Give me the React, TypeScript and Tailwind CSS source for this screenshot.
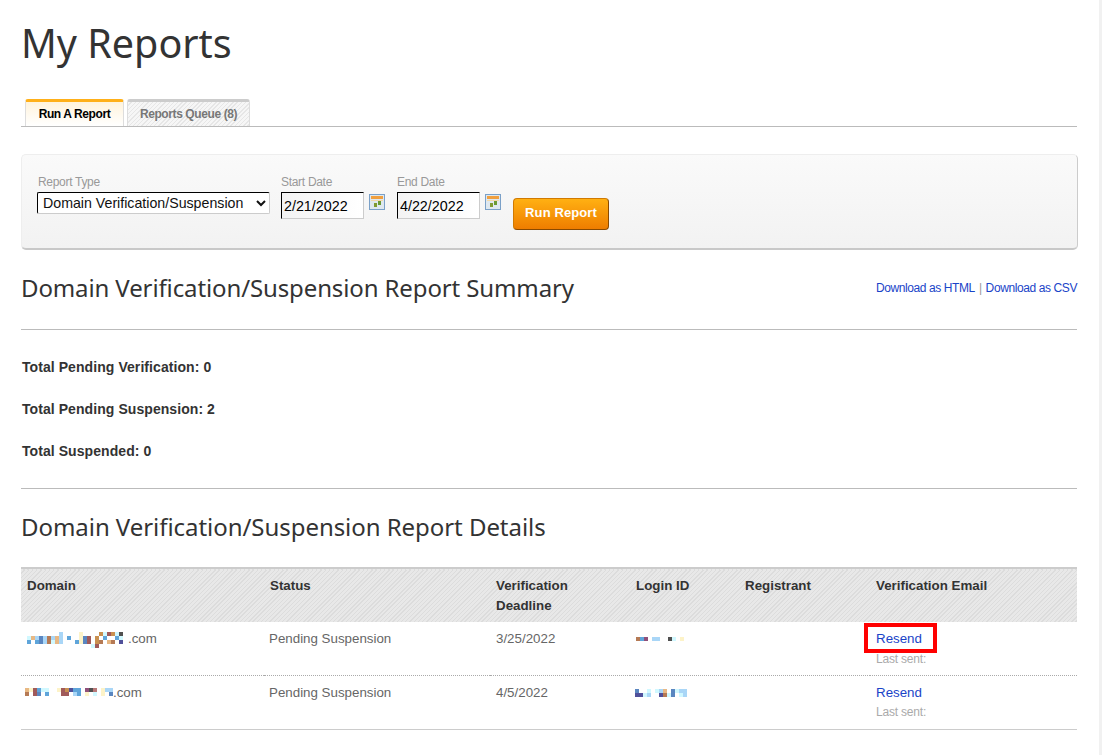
import React from 'react';

const palette: Record<string, string> = {
  a: '#a9d6f7',
  o: '#e8b884',
  d: '#5a86c0',
  b: '#b57a55',
  m: '#5fa5da',
  y: '#fdf3c8',
  r: '#a05a5a',
  c: '#c99050',
  p: '#d0f8ff',
  k: '#505050',
  n: '#50509a',
  u: '#90507a',
  v: '#b87878',
  z: '#fdfde0',
};

// stands in for the pixelated (redacted) parts of the table
const Mosaic = ({ rows, className }: { rows: string[]; className?: string }) => (
  <svg width={rows[0].length * 4} height={rows.length * 4} shapeRendering="crispEdges" className={className}>
    {rows.map((row, y) =>
      row.split('').map((ch, x) => (ch === '.' ? null : <rect key={`${x}-${y}`} x={x * 4} y={y * 4} width="4" height="4" fill={palette[ch]} />))
    )}
  </svg>
);

const CalendarIcon = () => (
  <svg width="16" height="16" viewBox="0 0 16 16" shapeRendering="crispEdges" className="mt-[2px] ml-[5px]">
    <rect x="0" y="0" width="16" height="16" fill="#7aa0c8" />
    <rect x="1" y="1" width="14" height="14" fill="#dfe8ef" />
    <rect x="2" y="2" width="12" height="3" fill="#f0a040" />
    <rect x="2" y="6" width="12" height="1" fill="#f3d9a8" />
    <rect x="5" y="9" width="3" height="4" fill="#7f9a30" />
    <rect x="9" y="7" width="3" height="4" fill="#6a9a35" />
  </svg>
);

const DateField = ({ label, value }: { label: string; value: string }) => (
  <div>
    <div className="text-[12px] leading-[14px] text-[#999] tracking-[-0.3px]">{label}</div>
    <div className="flex items-start mt-[3px]">
      <input
        readOnly
        value={value}
        className="w-[83px] h-[27px] pl-[2px] text-[14.3px] text-black bg-gradient-to-r from-[#f3f3f3] to-white border border-[#ccc] border-t-black border-l-black outline-none"
      />
      <CalendarIcon />
    </div>
  </div>
);

const Divider = () => <div className="h-px bg-[#bbb]" />;

const headers = ['Domain', 'Status', 'Verification Deadline', 'Login ID', 'Registrant', 'Verification Email'];

const rows = [
  {
    domain: ['........a....y....cprcpk', 'poadabaoa.m..ydr.c.m..mp', 'm.mdabpoa...mydr.cb.ob.n', '................pr......'],
    domainClass: 'mt-[3px]',
    comClass: 'ml-[5px]',
    status: 'Pending Suspension',
    deadline: '3/25/2022',
    login: ['bmu.aa..kp.y'],
    loginClass: 'mt-[8px]',
    sentClass: 'pt-[3px]',
    rowClass: 'h-[53px] border-b border-dotted border-[#aaa]',
    boxed: true,
  },
  {
    domain: ['oyrmpp..yrcnmm.ukv.yaa', 'b.rd.m...rr.am.y.p.y.d'],
    domainClass: 'mt-[5px] -ml-[2px]',
    comClass: 'ml-0',
    status: 'Pending Suspension',
    deadline: '4/5/2022',
    login: ['d..p.pao.dpaa', 'nnpa..nbpd.pa'],
    loginClass: 'mt-[6px] -ml-[1px]',
    sentClass: 'pt-[2px]',
    rowClass: 'h-[54px] border-b border-[#ccc]',
    boxed: false,
  },
];

export default function App() {
  return (
    <div className="w-[1102px] h-[755px] overflow-hidden bg-white flex font-['Liberation_Sans',Arial,sans-serif] text-[#333]">
      <div className="w-[1099px] pl-[21px] pr-[22px]">
        <h1 className="font-['Noto_Sans',sans-serif] text-[39.5px] leading-[60px] pt-[13px] text-[#333]">My Reports</h1>

        {/* Tabs */}
        <div className="mt-[25px] h-[28px] flex items-end pl-[4px] gap-[3px] border-b border-[#bbb] box-content">
          <div className="w-[99px] h-[27px] pt-[4px] text-center text-[12px] leading-[16px] font-bold tracking-[-0.4px] text-black border-t-[3px] border-x border-[#ffb019] border-x-[#ddd] rounded-t-[3px] bg-gradient-to-b from-[#fff3dc] to-white">
            Run A Report
          </div>
          <div className="w-[123px] h-[27px] pt-[4px] text-center text-[12px] leading-[16px] font-bold tracking-[-0.4px] text-[#777] border-t-[3px] border-x border-[#ccc] border-x-[#ddd] rounded-t-[3px] bg-[repeating-linear-gradient(135deg,#f6f6f6_0px,#f6f6f6_2px,#e6e6e6_2px,#e6e6e6_3px)]">
            Reports Queue (8)
          </div>
        </div>

        {/* Report form */}
        <div className="mt-[27px] h-[96px] w-[1057px] rounded-[5px] border border-[#eee] border-b-2 border-b-[#c8c8c8] border-r-[#ccc] bg-gradient-to-b from-[#fafafa] to-[#f2f2f2] pl-[16px] pt-[20px] flex items-start">
          <div className="w-[243px]">
            <div className="text-[12px] leading-[14px] text-[#999] tracking-[-0.3px]">Report Type</div>
            <select className="block mt-[3px] -ml-[1px] w-[233px] h-[22px] pl-[1px] text-[14.2px] leading-[20px] text-[#111] bg-white border border-[#ccc] border-t-black border-l-black rounded-[2px] outline-none">
              <option>Domain Verification/Suspension</option>
            </select>
          </div>
          <div className="w-[116px]">
            <DateField label="Start Date" value="2/21/2022" />
          </div>
          <div className="w-[116px]">
            <DateField label="End Date" value="4/22/2022" />
          </div>
          <button className="mt-[23px] w-[96px] h-[32px] pb-[2px] rounded-[4px] border border-[#d17a00] border-b-[#8a4a00] border-r-[#8a4a00] bg-gradient-to-b from-[#ffb012] to-[#ee7d00] text-white text-[13px] font-bold tracking-[0.1px]">
            Run Report
          </button>
        </div>

        {/* Summary */}
        <div className="mt-[19px] flex items-start justify-between">
          <h2 className="font-['Noto_Sans',sans-serif] text-[24px] leading-[38px] text-[#333] tracking-[-0.12px]">Domain Verification/Suspension Report Summary</h2>
          <div className="pt-[11px] text-[12px] leading-[16px] tracking-[-0.4px] text-[#999]">
            <a className="text-[#1a44c8]">Download as HTML</a>
            <span className="mx-[4px]">|</span>
            <a className="text-[#1a44c8]">Download as CSV</a>
          </div>
        </div>
        <div className="mt-[22px]">
          <Divider />
        </div>
        <div className="pl-[1px] pt-[29px] pb-[29px] flex flex-col gap-[26px] text-[14px] leading-[16px] font-bold tracking-[0.07px]">
          <div>Total Pending Verification: 0</div>
          <div>Total Pending Suspension: 2</div>
          <div>Total Suspended: 0</div>
        </div>
        <Divider />

        {/* Details */}
        <h2 className="mt-[19px] font-['Noto_Sans',sans-serif] text-[24px] leading-[38px] text-[#333] tracking-[-0.05px]">Domain Verification/Suspension Report Details</h2>
        <table className="mt-[21px] w-[1056px] table-fixed border-collapse text-[13.33px] leading-[20px]">
          <colgroup>
            <col className="w-[243px]" />
            <col className="w-[226px]" />
            <col className="w-[140px]" />
            <col className="w-[109px]" />
            <col className="w-[131px]" />
            <col className="w-[207px]" />
          </colgroup>
          <thead>
            <tr className="h-[54px] border-t-2 border-[#ccc] bg-[repeating-linear-gradient(135deg,#e8e8e8_0px,#e8e8e8_2px,#dcdcdc_2px,#dcdcdc_3px)]">
              {headers.map((h) => (
                <th key={h} className="px-[6px] pt-[7px] align-top text-left font-bold text-[#333]">
                  {h === 'Verification Email' ? <span className="whitespace-nowrap">{h}</span> : <div className="max-w-[108px]">{h}</div>}
                </th>
              ))}
            </tr>
          </thead>
          <tbody className="text-[#666]">
            {rows.map((row, i) => (
              <tr key={i} className={row.rowClass}>
                <td className="pl-[6px] pt-[7px] align-top">
                  <div className="flex items-start h-[20px]">
                    <Mosaic rows={row.domain} className={row.domainClass} />
                    <span className={row.comClass}>.com</span>
                  </div>
                </td>
                <td className="pl-[5px] pt-[7px] align-top">{row.status}</td>
                <td className="pl-[6px] pt-[7px] align-top">{row.deadline}</td>
                <td className="pl-[6px] pt-[7px] align-top">
                  <div className="flex items-start h-[20px]">
                    <Mosaic rows={row.login} className={row.loginClass} />
                  </div>
                </td>
                <td />
                <td className="pl-[6px] pt-[7px] align-top">
                  <div className="relative">
                    <a className="text-[#1a44c8]">Resend</a>
                    {row.boxed && <div className="absolute left-[-12px] top-[-6px] w-[73px] h-[30px] border-[4px] border-[#f00]" />}
                  </div>
                  <div className={`text-[12px] leading-[14px] text-[#aaa] tracking-[-0.2px] ${row.sentClass}`}>Last sent:</div>
                </td>
              </tr>
            ))}
          </tbody>
        </table>
      </div>
      <div className="w-[3px] bg-[#f1f1f1]" />
    </div>
  );
}
